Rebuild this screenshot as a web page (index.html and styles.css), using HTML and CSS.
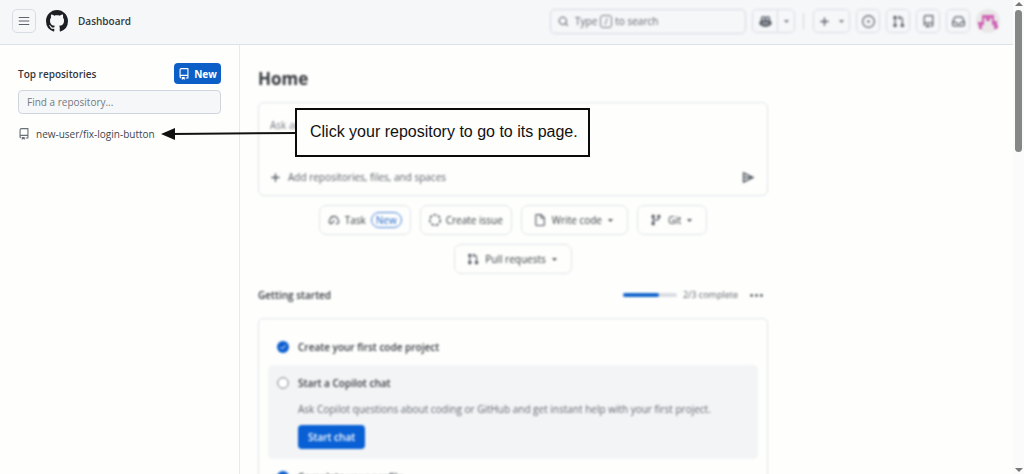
FILE: index.html
```html
<!DOCTYPE html>
<html lang="en">
<head>
<meta charset="utf-8">
<meta name="viewport" content="width=device-width, initial-scale=1">
<title>Dashboard</title>
<link rel="stylesheet" href="styles.css">
</head>
<body>
<svg class="symbols" aria-hidden="true">
  <symbol id="repo" viewBox="0 0 16 16"><path d="M2 2.5A2.5 2.5 0 0 1 4.500 0h8.750a.75.75 0 0 1 .75.75v12.500a.75.75 0 0 1-.75.75h-2.500a.75.75 0 0 1 0-1.500h1.750v-2h-8a1 1 0 0 0-.714 1.700.75.75 0 1 1-1.072 1.050A2.495 2.495 0 0 1 2 11.500Zm10.500-1h-8a1 1 0 0 0-1 1v6.708A2.486 2.486 0 0 1 4.500 9h8ZM5 12.250a.25.25 0 0 1 .25-.25h3.500a.25.25 0 0 1 .25.25v3.250a.25.25 0 0 1-.4.200l-1.450-1.087a.249.249 0 0 0-.300 0L5.400 15.700a.25.25 0 0 1-.4-.200Z"/></symbol>
  <symbol id="pull" viewBox="0 0 16 16"><path d="M1.500 3.250a2.250 2.250 0 1 1 3 2.122v5.256a2.251 2.251 0 1 1-1.500 0V5.372A2.250 2.250 0 0 1 1.500 3.250Zm5.677-.177L9.573.677A.25.25 0 0 1 10 .854V2.500h1A2.500 2.500 0 0 1 13.500 5v5.628a2.251 2.251 0 1 1-1.500 0V5a1 1 0 0 0-1-1h-1v1.646a.25.25 0 0 1-.427.177L7.177 3.427a.25.25 0 0 1 0-.354Z"/></symbol>
  <symbol id="plus" viewBox="0 0 16 16"><path d="M7 2h2v5h5v2H9v5H7V9H2V7h5Z"/></symbol>
  <symbol id="caret" viewBox="0 0 8 8"><path d="M0 2h8L4 6Z"/></symbol>
</svg>

<div class="page">
  <header class="topbar">
    <div class="brand">
      <button class="icon-btn" type="button" aria-label="Open menu"><svg class="icon-lg" viewBox="0 0 16 16"><path d="M1 2.750h14v1.300H1Zm0 4.600h14v1.300H1Zm0 4.600h14v1.300H1Z"/></svg></button>
      <a class="logo" href="#" aria-label="Home"><svg viewBox="0 0 16 16"><path d="M8 0c4.420 0 8 3.580 8 8a8.013 8.013 0 0 1-5.450 7.590c-.4.080-.55-.17-.55-.38 0-.27.010-1.130.010-2.200 0-.75-.25-1.230-.54-1.480 1.780-.2 3.650-.88 3.650-3.950 0-.88-.31-1.590-.82-2.150.08-.2.360-1.020-.08-2.120 0 0-.67-.22-2.200.82-.64-.18-1.320-.27-2-.27-.68 0-1.360.09-2 .27-1.530-1.030-2.200-.82-2.200-.82-.44 1.100-.16 1.920-.08 2.120-.51.560-.82 1.280-.82 2.150 0 3.060 1.860 3.750 3.640 3.950-.23.2-.44.550-.51 1.070-.46.210-1.610.550-2.330-.66-.15-.24-.6-.83-1.230-.82-.67.010-.27.380.010.530.34.190.73.900.82 1.130.16.450.68 1.310 2.690.940 0 .67.010 1.300.010 1.490 0 .21-.15.450-.55.380A7.995 7.995 0 0 1 0 8c0-4.420 3.580-8 8-8Z"/></svg></a>
      <a class="crumb" href="#">Dashboard</a>
    </div>
    <div class="tools soft">
      <button class="search" type="button"><svg class="icon" viewBox="0 0 16 16"><path d="M10.680 11.740a6 6 0 1 1 1.060-1.060l3.040 3.040-1.060 1.060ZM11.500 7a4.500 4.500 0 1 0-9 0 4.500 4.500 0 0 0 9 0Z"/></svg><span>Type</span><kbd>/</kbd><span>to search</span></button>
      <div class="split">
        <button type="button" aria-label="Copilot"><svg class="icon-lg" viewBox="0 0 16 16"><path d="M8 2.500C6.800 1.200 3 1.400 2.500 3.500c-.3 1-.3 2.200 0 3C1.300 7.200.5 8.500.5 9.500v1.800C2 13 5 14.500 8 14.500s6-1.500 7.500-3.200V9.500c0-1-.8-2.300-2-3 .3-.8.3-2 0-3C13 1.400 9.200 1.200 8 2.500ZM4 4c.5-1 3-1 3 .2 0 1.300-.5 2.100-1.500 2.100S3.800 5.500 4 4Zm8 0c.2 1.500-.5 2.300-1.500 2.300S9 5.500 9 4.200C9 3 11.500 3 12 4ZM5.500 9H7v2.500H5.500Zm3.500 0h1.500v2.500H9Z"/></svg></button>
        <button class="drop" type="button" aria-label="Copilot options"><svg class="caret"><use href="#caret"/></svg></button>
      </div>
      <span class="divider"></span>
      <button class="icon-btn create" type="button" aria-label="Create new"><svg class="icon"><use href="#plus"/></svg><svg class="caret"><use href="#caret"/></svg></button>
      <button class="icon-btn" type="button" aria-label="Issues"><svg class="icon-lg" viewBox="0 0 16 16"><path d="M8 0a8 8 0 1 1 0 16A8 8 0 0 1 8 0ZM1.500 8a6.500 6.500 0 1 0 13 0 6.500 6.500 0 0 0-13 0Z"/><circle cx="8" cy="8" r="1.500"/></svg></button>
      <button class="icon-btn" type="button" aria-label="Pull requests"><svg class="icon-lg"><use href="#pull"/></svg></button>
      <button class="icon-btn" type="button" aria-label="Repositories"><svg class="icon-lg"><use href="#repo"/></svg></button>
      <button class="icon-btn" type="button" aria-label="Inbox"><svg class="icon-lg" viewBox="0 0 16 16"><path d="M5 1.500h6a3 3 0 0 1 2.800 2L16 8.500V12a2 2 0 0 1-2 2H2a2 2 0 0 1-2-2V8.500l2.200-5A3 3 0 0 1 5 1.500ZM5 3a1.500 1.500 0 0 0-1.400 1L1.800 8H5l1.500 2h3L11 8h3.200l-1.800-4A1.500 1.500 0 0 0 11 3ZM1.500 9.500V12a.5.500 0 0 0 .5.500h12a.5.500 0 0 0 .5-.5V9.500h-2.700l-1.500 2H5.700l-1.500-2Z"/></svg></button>
      <a class="avatar" href="#" aria-label="Profile"><svg viewBox="0 0 24 24"><path d="M6 6h12v6h3v4h1v4h-4v-4h-2V9h-2v3h-4V9H8v7H6v4H3v-4H2v-3h4Z"/></svg></a>
    </div>
  </header>

  <div class="columns">
    <aside class="sidebar">
      <div class="side-head">
        <h2>Top repositories</h2>
        <button class="new-btn" type="button"><svg class="icon-lg"><use href="#repo"/></svg>New</button>
      </div>
      <input class="find" type="text" placeholder="Find a repository..." aria-label="Find a repository">
      <a class="repo" href="#"><svg class="icon-lg"><use href="#repo"/></svg>new-user/fix-login-button</a>
    </aside>

    <main class="content soft">
      <h1>Home</h1>
      <form class="prompt">
        <textarea rows="1" placeholder="Ask anything" aria-label="Ask anything"></textarea>
        <div class="prompt-foot">
          <button class="plain" type="button"><svg class="icon"><use href="#plus"/></svg>Add repositories, files, and spaces</button>
          <button class="plain" type="button" aria-label="Send"><svg class="send" viewBox="0 0 16 16"><path d="M1 1 15.500 8 1 15Zm1.800 3v3.200H10Zm0 4.800V12L10 8.800Z"/></svg></button>
        </div>
      </form>

      <div class="chips">
        <button class="chip" type="button"><svg class="icon-lg" viewBox="0 0 16 16"><path d="M4 13.500a3.500 3.500 0 0 1-2.300-6A6.300 6.300 0 0 1 14 7.300a3.600 3.600 0 0 1-1.500 6.200h-2V12h1.500a2.200 2.200 0 0 0 .6-4l-.1-.6a4.800 4.800 0 0 0-9.300.9A2 2 0 0 0 4 12l4-4 1.100 1L5 13.500Z"/></svg>Task<span class="badge">New</span></button>
        <button class="chip" type="button"><svg class="icon-lg" viewBox="0 0 16 16"><circle class="dashed" cx="8" cy="8" r="7"/></svg>Create issue</button>
        <button class="chip menu" type="button"><svg class="icon-lg" viewBox="0 0 16 16"><path d="M3.500 0h6.200L14.500 4.800v9.400a1.800 1.800 0 0 1-1.800 1.800H3.500a1.800 1.800 0 0 1-1.800-1.800V1.800A1.800 1.800 0 0 1 3.500 0Zm0 1.500a.3.300 0 0 0-.3.300v12.400c0 .2.100.3.300.3h9.200a.3.300 0 0 0 .3-.3V6H9.500a1 1 0 0 1-1-1V1.500ZM10 2v2.500h2.500Z"/></svg>Write code<svg class="caret"><use href="#caret"/></svg></button>
        <button class="chip menu" type="button"><svg class="icon-lg" viewBox="0 0 16 16"><path d="M9.500 3.250a2.250 2.250 0 1 1 3 2.122V6A2.500 2.500 0 0 1 10 8.500H6a1 1 0 0 0-1 1v1.128a2.251 2.251 0 1 1-1.500 0V5.372a2.250 2.250 0 1 1 1.500 0v1.836A2.493 2.493 0 0 1 6 7h4a1 1 0 0 0 1-1v-.628A2.250 2.250 0 0 1 9.500 3.250Z"/></svg>Git<svg class="caret"><use href="#caret"/></svg></button>
        <button class="chip menu" type="button"><svg class="icon-lg"><use href="#pull"/></svg>Pull requests<svg class="caret"><use href="#caret"/></svg></button>
      </div>

      <section class="started">
        <div class="started-head">
          <h2>Getting started</h2>
          <span class="track"><span class="fill"></span></span>
          <span class="count">2/3 complete</span>
          <button class="plain" type="button" aria-label="More options"><svg class="dots" viewBox="0 0 16 16"><circle cx="2" cy="8" r="1.700"/><circle cx="8" cy="8" r="1.700"/><circle cx="14" cy="8" r="1.700"/></svg></button>
        </div>
        <ul class="steps">
          <li><svg class="mark" viewBox="0 0 12 12"><circle class="done" cx="6" cy="6" r="6"/><path class="tick" d="m3.500 6.200 1.700 1.700 3.500-3.700"/></svg><h3>Create your first code project</h3></li>
          <li class="current"><svg class="mark" viewBox="0 0 12 12"><circle class="open" cx="6" cy="6" r="5.300"/></svg>
            <div class="step-body">
              <h3>Start a Copilot chat</h3>
              <p>Ask Copilot questions about coding or GitHub and get instant help with your first project.</p>
              <button class="start" type="button">Start chat</button>
            </div></li>
          <li><svg class="mark" viewBox="0 0 12 12"><circle class="done" cx="6" cy="6" r="6"/><path class="tick" d="m3.500 6.200 1.700 1.700 3.500-3.700"/></svg><h3>Complete your profile</h3></li>
        </ul>
      </section>
    </main>
  </div>
</div>

<div class="scroll" aria-hidden="true">
  <svg class="arrow" viewBox="0 0 8 8"><path d="M0 6h8L4 2Z"/></svg>
  <span class="thumb"></span>
  <svg class="arrow"><use href="#caret"/></svg>
</div>

<div class="callout" role="note">
  <svg class="pointer" viewBox="0 0 136 16" aria-hidden="true"><path class="line" d="M10 9 136 8"/><path d="M0 9 14 3v12Z"/></svg>
  <p>Click your repository to go to its page.</p>
</div>
</body>
</html>
```
FILE: styles.css
```css
* { box-sizing: border-box; }
body {
  margin: 0;
  height: 100vh;
  overflow: hidden;
  display: flex;
  position: relative;
  background: #fefefd;
  color: #33373c;
  font: 10px/16px "Open Sans", "Noto Sans", sans-serif;
}
h1, h2, h3, p, ul { margin: 0; padding: 0; font-size: inherit; }
h2, h3 { font-weight: 600; }
a { color: inherit; text-decoration: none; }
button, input, textarea { font: inherit; color: inherit; }
button { padding: 0; border: 0; background: none; }
svg { fill: currentColor; flex: none; display: block; }
.symbols { position: absolute; width: 0; height: 0; }
.soft { filter: blur(1px); }
.icon { width: 11px; height: 11px; }
.icon-lg { width: 12px; height: 12px; }
.caret { width: 5px; height: 5px; }

.page { flex: 1; min-width: 0; }
.topbar {
  height: 45px;
  padding: 0 13px 2px 12px;
  display: flex;
  align-items: center;
  justify-content: space-between;
  background: #f6f7f9;
  border-bottom: 1px solid #dce1e8;
}
.brand, .tools { display: flex; align-items: center; }
.brand { gap: 10px; }
.icon-btn, .split {
  min-width: 24px;
  height: 24px;
  display: flex;
  align-items: center;
  justify-content: center;
  border: 1px solid #d8dce4;
  border-radius: 5px;
  color: #5d636c;
}
.logo svg { width: 22px; height: 22px; color: #1c2024; }
.crumb { font-weight: 600; }
.tools { gap: 6px; color: #5d636c; }
.tools .icon-lg { width: 13px; height: 13px; }
.search {
  width: 196px;
  height: 25px;
  padding: 0 7px;
  display: flex;
  align-items: center;
  gap: 3px;
  border: 1px solid #d4d8e2;
  border-radius: 5px;
}
.search .icon { margin-right: 3px; }
.search kbd {
  width: 12px;
  height: 13px;
  border: 1px solid #7b818a;
  border-radius: 3px;
  font: 9px/11px "Open Sans", sans-serif;
}
.split { width: 43px; }
.split button { height: 22px; flex: 1; display: flex; align-items: center; justify-content: center; }
.split .drop { border-left: 1px solid #d8dce4; flex: 0 0 17px; }
.divider { width: 1px; height: 16px; margin: 0 3px 0 2px; background: #cfd4dc; }
.create { width: 37px; gap: 9px; }
.avatar { width: 24px; height: 24px; border-radius: 50%; background: #e9e7e7; overflow: hidden; color: #cf62b4; }

.columns { display: flex; align-items: stretch; min-height: calc(100vh - 45px); }
.sidebar { width: 240px; flex: none; padding: 18px 18px 0; border-right: 1px solid #e6eaef; }
.side-head { display: flex; justify-content: space-between; align-items: center; }
.new-btn {
  width: 47px;
  height: 21px;
  display: flex;
  align-items: center;
  justify-content: center;
  gap: 4px;
  border-radius: 4px;
  background: #0c5fc6;
  color: #fff;
  font-weight: 700;
}
.find {
  width: 100%;
  height: 24px;
  margin-top: 6px;
  padding: 0 8px;
  display: block;
  border: 1px solid #cfd5dd;
  border-radius: 4px;
  background: #f5f7f9;
}
.find::placeholder, textarea::placeholder { color: #737980; opacity: 1; }
.repo { display: flex; align-items: center; gap: 6px; margin-top: 12px; color: #41464c; }
.repo .icon-lg { color: #6a7077; }

.content { flex: 1; min-width: 0; max-width: 528px; padding: 22px 0 0 18px; }
h1 { font-size: 17px; line-height: 24px; font-weight: 700; }
.prompt { margin-top: 11px; padding: 14px 12px 10px 11px; border: 1px solid #dfe5ea; border-radius: 6px; }
.prompt textarea { width: 100%; height: 44px; padding: 0; display: block; border: 0; resize: none; background: none; }
.prompt-foot { display: flex; justify-content: space-between; margin-top: 8px; }
.plain { display: flex; align-items: center; gap: 7px; color: #555b62; }
.send { width: 13px; height: 13px; }
.chips { display: flex; flex-wrap: wrap; justify-content: center; gap: 9px; padding: 9px 48px 0; }
.chip {
  height: 30px;
  padding: 0 8px;
  display: flex;
  align-items: center;
  gap: 5px;
  border: 1px solid #dfe4e9;
  border-radius: 7px;
}
.chip.menu { padding: 0 14px 0 12px; gap: 6px; }
.chip .icon-lg { color: #555b62; }
.dashed { fill: none; stroke: currentColor; stroke-width: 2; stroke-dasharray: 4 2; }
.badge { padding: 0 4px; line-height: 14px; border: 1px solid #4b86da; border-radius: 8px; color: #2469c8; }
.started { margin-top: 13px; }
.started-head { display: flex; align-items: center; }
.started-head h2 { margin-right: auto; }
.track { width: 54px; height: 4px; margin-right: 6px; display: flex; border-radius: 2px; background: #d9dce2; }
.fill { width: 66%; border-radius: 2px; background: #1464cc; }
.count { margin-right: 12px; font-size: 9px; color: #5d636a; }
.started .plain { margin-right: 5px; }
.dots { width: 13px; height: 13px; }
.steps { list-style: none; margin-top: 15px; padding: 10px 9px; border: 1px solid #dfe5ea; border-radius: 5px; }
.steps li { display: flex; gap: 9px; padding: 10px 9px; border-radius: 5px; }
.mark { width: 12px; height: 12px; margin-top: 2px; }
.done { fill: #0c5fd0; }
.open { fill: #fff; stroke: #7d838a; stroke-width: 1; }
.tick { fill: none; stroke: #fff; stroke-width: 1; }
.steps .current { background: #f3f4f6; }
.step-body p { margin-top: 10px; color: #60666d; }
.start {
  height: 24px;
  margin-top: 8px;
  padding: 0 10px;
  border-radius: 4px;
  background: #0860d4;
  color: #fff;
  font-weight: 600;
}

.scroll { width: 11px; display: flex; flex-direction: column; align-items: center; color: #777; background: #fbfbfb; }
.scroll .arrow { width: 8px; height: 8px; }
.scroll .thumb { width: 7px; height: 142px; margin: 2px 0 auto; border-radius: 4px; background: #858686; }

.callout {
  position: absolute;
  left: 295px;
  top: 108px;
  padding: 12px 10px 13px 13px;
  border: 2px solid #0b0b0b;
  background: #fefefd;
  color: #111;
  font: 16px/20px "Liberation Sans", Arial, sans-serif;
}
.pointer { position: absolute; right: 100%; top: 15px; width: 136px; height: 16px; }
.line { fill: none; stroke: currentColor; stroke-width: 2; }
```
